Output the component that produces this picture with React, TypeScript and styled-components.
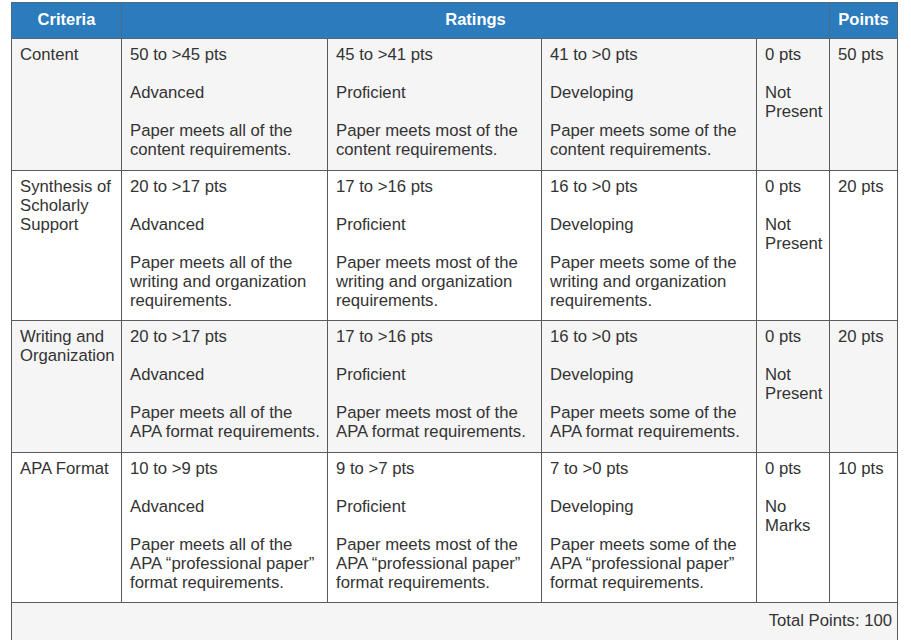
import styled, { createGlobalStyle } from 'styled-components';

type TRating = {
  points: string;
  label: string;
  desc: string[];
};

type TCriterion = {
  name: string[];
  ratings: TRating[];
  total: string;
};

const GlobalStyle = createGlobalStyle`
  html, body {
    margin: 0;
    padding: 0;
    background: #ffffff;
  }
  body {
    font-family: 'Liberation Sans', Arial, sans-serif;
    color: #333333;
  }
`;

const levels = (pts: string[], last: string[], descs: string[][]): TRating[] => [
  { points: pts[0], label: 'Advanced', desc: descs[0] },
  { points: pts[1], label: 'Proficient', desc: descs[1] },
  { points: pts[2], label: 'Developing', desc: descs[2] },
  { points: '0 pts', label: '', desc: last },
];

const criteria: TCriterion[] = [
  {
    name: ['Content'],
    ratings: levels(
      ['50 to >45 pts', '45 to >41 pts', '41 to >0 pts'],
      ['Not', 'Present'],
      [
        ['Paper meets all of the', 'content requirements.'],
        ['Paper meets most of the', 'content requirements.'],
        ['Paper meets some of the', 'content requirements.'],
      ]
    ),
    total: '50 pts',
  },
  {
    name: ['Synthesis of', 'Scholarly', 'Support'],
    ratings: levels(
      ['20 to >17 pts', '17 to >16 pts', '16 to >0 pts'],
      ['Not', 'Present'],
      [
        ['Paper meets all of the', 'writing and organization', 'requirements.'],
        ['Paper meets most of the', 'writing and organization', 'requirements.'],
        ['Paper meets some of the', 'writing and organization', 'requirements.'],
      ]
    ),
    total: '20 pts',
  },
  {
    name: ['Writing and', 'Organization'],
    ratings: levels(
      ['20 to >17 pts', '17 to >16 pts', '16 to >0 pts'],
      ['Not', 'Present'],
      [
        ['Paper meets all of the', 'APA format requirements.'],
        ['Paper meets most of the', 'APA format requirements.'],
        ['Paper meets some of the', 'APA format requirements.'],
      ]
    ),
    total: '20 pts',
  },
  {
    name: ['APA Format'],
    ratings: levels(
      ['10 to >9 pts', '9 to >7 pts', '7 to >0 pts'],
      ['No', 'Marks'],
      [
        ['Paper meets all of the', 'APA \u201cprofessional paper\u201d', 'format requirements.'],
        ['Paper meets most of the', 'APA \u201cprofessional paper\u201d', 'format requirements.'],
        ['Paper meets some of the', 'APA \u201cprofessional paper\u201d', 'format requirements.'],
      ]
    ),
    total: '10 pts',
  },
];

const Lines = ({ lines }: { lines: string[] }) => (
  <>
    {lines.map((l, i) => (
      <span key={i}>
        {l}
        {i < lines.length - 1 && <br />}
      </span>
    ))}
  </>
);

export default function App() {
  return (
    <Page>
      <GlobalStyle />
      <Rubric>
        <colgroup>
          <col style={{ width: 110 }} />
          <col style={{ width: 206 }} />
          <col style={{ width: 214 }} />
          <col style={{ width: 215 }} />
          <col style={{ width: 73 }} />
          <col style={{ width: 68 }} />
        </colgroup>
        <thead>
          <tr>
            <HeadCell>Criteria</HeadCell>
            <HeadCell colSpan={4}>Ratings</HeadCell>
            <HeadCell>Points</HeadCell>
          </tr>
        </thead>
        <tbody>
          {criteria.map((c, idx) => (
            <Row key={idx} $shaded={idx % 2 === 0}>
              <Cell>
                <Lines lines={c.name} />
              </Cell>
              {c.ratings.map((r, j) => (
                <Cell key={j}>
                  <Item>{r.points}</Item>
                  {r.label && <Item>{r.label}</Item>}
                  <Item>
                    <Lines lines={r.desc} />
                  </Item>
                </Cell>
              ))}
              <Cell>{c.total}</Cell>
            </Row>
          ))}
          <Row $shaded>
            <FooterCell colSpan={6}>Total Points: 100</FooterCell>
          </Row>
        </tbody>
      </Rubric>
    </Page>
  );
}

const Page = styled.div`
  padding: 2px 0 0 11px;
`;

const Rubric = styled.table`
  width: 887px;
  table-layout: fixed;
  border-collapse: collapse;
  border: 1px solid #5a5a5a;
  font-family: 'Liberation Sans', Arial, sans-serif;
  font-size: 16.7px;
  line-height: 19px;
  color: #333333;
`;

const HeadCell = styled.th`
  height: 33px;
  padding: 0 6px 2px;
  background: #2b7bbd;
  color: #ffffff;
  font-weight: bold;
  font-size: 16.5px;
  text-align: center;
  vertical-align: middle;
  border: 1px solid #4d6a80;
`;

const Row = styled.tr<{ $shaded?: boolean }>`
  background: ${({ $shaded }) => ($shaded ? '#f5f5f5' : '#ffffff')};
`;

const Cell = styled.td`
  padding: 6px 4px 10.5px 8px;
  vertical-align: top;
  text-align: left;
  white-space: nowrap;
  border: 1px solid #5a5a5a;
`;

const Item = styled.div`
  margin-bottom: 19px;

  &:last-child {
    margin-bottom: 0;
  }
`;

const FooterCell = styled.td`
  height: 35px;
  padding: 0 5px 2px 8px;
  text-align: right;
  vertical-align: middle;
  border: 1px solid #5a5a5a;
`;
